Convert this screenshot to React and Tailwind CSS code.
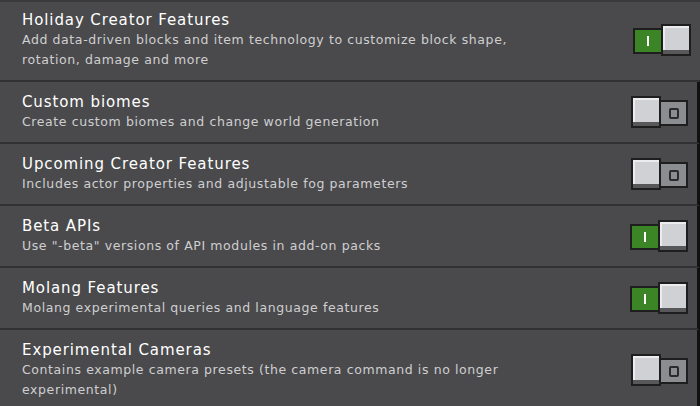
import React from 'react';

const rows = [
  {
    title: 'Holiday Creator Features',
    desc: ['Add data-driven blocks and item technology to customize block shape,', 'rotation, damage and more'],
    on: true,
  },
  { title: 'Custom biomes', desc: ['Create custom biomes and change world generation'], on: false },
  { title: 'Upcoming Creator Features', desc: ['Includes actor properties and adjustable fog parameters'], on: false },
  { title: 'Beta APIs', desc: ['Use "-beta" versions of API modules in add-on packs'], on: true },
  { title: 'Molang Features', desc: ['Molang experimental queries and language features'], on: true },
  {
    title: 'Experimental Cameras',
    desc: ['Contains example camera presets (the camera command is no longer', 'experimental)'],
    on: false,
  },
];

const Knob = () => (
  <div className="w-[30px] h-[32px] border-2 border-[#1e1e1f] bg-[#58585a] flex flex-col">
    <div className="flex-1 bg-[#d0d1d4] border-l-2 border-t-2 border-[#ececee]" />
    <div className="h-[4px]" />
  </div>
);

const Toggle = ({ on }) => (
  <div className="flex items-start">
    {on ? (
      <>
        <div className="w-[30px] h-[26px] mt-[4px] -mr-[2px] border-2 border-[#1e1e1f] bg-[#3c8527] flex items-center justify-center">
          <div className="w-[2px] h-[10px] bg-white" />
        </div>
        <Knob />
      </>
    ) : (
      <>
        <Knob />
        <div className="w-[29px] h-[26px] mt-[4px] -ml-[2px] border-2 border-[#1e1e1f] bg-[#8c8d90] flex items-center justify-center">
          <div className="w-[10px] h-[11px] border-2 border-[#2a2a2c] rounded-[2px]" />
        </div>
      </>
    )}
  </div>
);

export default function App() {
  return (
    <div className="w-[700px] h-[406px] overflow-hidden bg-[#4a4a4c] border-t-2 border-[#3a3a3c]" style={{ fontFamily: '"DejaVu Sans", sans-serif' }}>
      {rows.map((r, i) => (
        <div
          key={i}
          className={`flex items-center justify-between pl-[22px] pr-[9px] pb-[10px] border-b-2 border-[#313133] ${i > 0 ? 'pt-[10px] border-r-[3px] border-r-[#111112]' : 'pt-[8px]'}`}
        >
          <div className="flex flex-col">
            <div className="text-[15px] leading-[20px] tracking-[0.9px] text-white">{r.title}</div>
            {r.desc.map((d, j) => (
              <div key={j} className="text-[12.5px] leading-[20px] tracking-[0.6px] text-[#cfcfd1]">{d}</div>
            ))}
          </div>
          <Toggle on={r.on} />
        </div>
      ))}
    </div>
  );
}
